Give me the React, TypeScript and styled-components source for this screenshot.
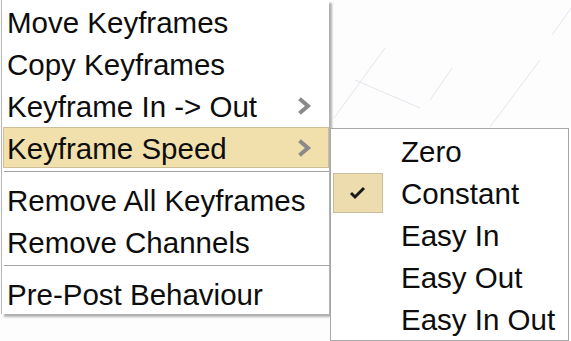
import React from "react";
import styled, { createGlobalStyle } from "styled-components";

const Global = createGlobalStyle`
  html, body { margin: 0; padding: 0; background: #fdfdfe; overflow: hidden; }
  body { font-family: "Liberation Sans", Arial, sans-serif; }
  #root { width: 571px; height: 341px; }
`;

const Stage = styled.div`
  position: relative;
  width: 571px;
  height: 341px;
  display: flex;
  align-items: flex-start;
  overflow: hidden;
`;

const Backdrop = styled.svg`
  position: absolute;
  left: 0;
  top: 0;
  width: 571px;
  height: 341px;
  pointer-events: none;
`;

const MainMenu = styled.div`
  position: relative;
  margin-left: 1px;
  width: 328px;
  height: 314px;
  box-sizing: border-box;
  background: #ffffff;
  border-left: 1px solid #b4b4b4;
  box-shadow: 3px 3px 2px rgba(0, 0, 0, 0.3);
  padding: 1px 0 0 1px;
  display: flex;
  flex-direction: column;
`;

const Item = styled.div<{ $active?: boolean }>`
  height: 42px;
  box-sizing: border-box;
  padding: 3px 16px 0 3px;
  display: flex;
  align-items: center;
  justify-content: space-between;
  font-size: 29.5px;
  color: #0d0d0d;
  white-space: nowrap;
  background: ${(p) => (p.$active ? "#f2e0ac" : "transparent")};
  border: 1px solid ${(p) => (p.$active ? "#cdbf98" : "transparent")};
`;

const Separator = styled.div`
  height: 1px;
  background: #a4a4a4;
  margin: 3px 0 6px 1px;
`;

const SubMenu = styled.div`
  position: relative;
  margin-top: 128px;
  margin-left: 1px;
  width: 239px;
  height: 213px;
  box-sizing: border-box;
  background: #ffffff;
  border: 1px solid #a8a8a8;
  padding: 1px 2px;
  display: flex;
  flex-direction: column;
`;

const SubItem = styled.div`
  height: 42px;
  display: flex;
  align-items: center;
  font-size: 29.5px;
  color: #0d0d0d;
  white-space: nowrap;
`;

const Label = styled.span`
  padding-top: 3px;
`;

const CheckCell = styled.div<{ $checked?: boolean }>`
  width: 50px;
  height: 40px;
  box-sizing: border-box;
  margin-right: 18px;
  display: flex;
  align-items: center;
  justify-content: center;
  background: ${(p) => (p.$checked ? "#ecdcae" : "transparent")};
  border: 1px solid ${(p) => (p.$checked ? "#c9bd9c" : "transparent")};
`;

const Chevron = () => (
  <svg width="14" height="18" viewBox="0 0 14 18" style={{ marginTop: -3 }}>
    <polyline points="3,3 10,9 3,15" fill="none" stroke="#8a8a8a" strokeWidth="4" strokeLinejoin="miter" strokeLinecap="square" />
  </svg>
);

const Check = () => (
  <svg width="18" height="14" viewBox="0 0 18 14">
    <polyline points="2,7 6,11 15,2" fill="none" stroke="#1a1a1a" strokeWidth="3" />
  </svg>
);

const mainTop = ["Move Keyframes", "Copy Keyframes"];
const speeds = ["Zero", "Constant", "Easy In", "Easy Out", "Easy In Out"];

export default function App() {
  return (
    <>
      <Global />
      <Stage>
        <Backdrop viewBox="0 0 571 341">
          <g stroke="#d3d8e6" strokeWidth="1" opacity="0.6">
            <line x1="334" y1="118" x2="385" y2="48" />
            <line x1="430" y1="100" x2="452" y2="68" />
            <line x1="490" y1="127" x2="540" y2="60" />
            <line x1="552" y1="35" x2="571" y2="8" />
            <line x1="355" y1="80" x2="420" y2="108" />
          </g>
        </Backdrop>
        <MainMenu>
          {mainTop.map((t) => (
            <Item key={t}>{t}</Item>
          ))}
          <Item>
            Keyframe In -&gt; Out
            <Chevron />
          </Item>
          <Item $active>
            Keyframe Speed
            <Chevron />
          </Item>
          <Separator />
          <Item>Remove All Keyframes</Item>
          <Item>Remove Channels</Item>
          <Separator />
          <Item>Pre-Post Behaviour</Item>
        </MainMenu>
        <SubMenu>
          {speeds.map((s) => (
            <SubItem key={s}>
              <CheckCell $checked={s === "Constant"}>{s === "Constant" && <Check />}</CheckCell>
              <Label>{s}</Label>
            </SubItem>
          ))}
        </SubMenu>
      </Stage>
    </>
  );
}
